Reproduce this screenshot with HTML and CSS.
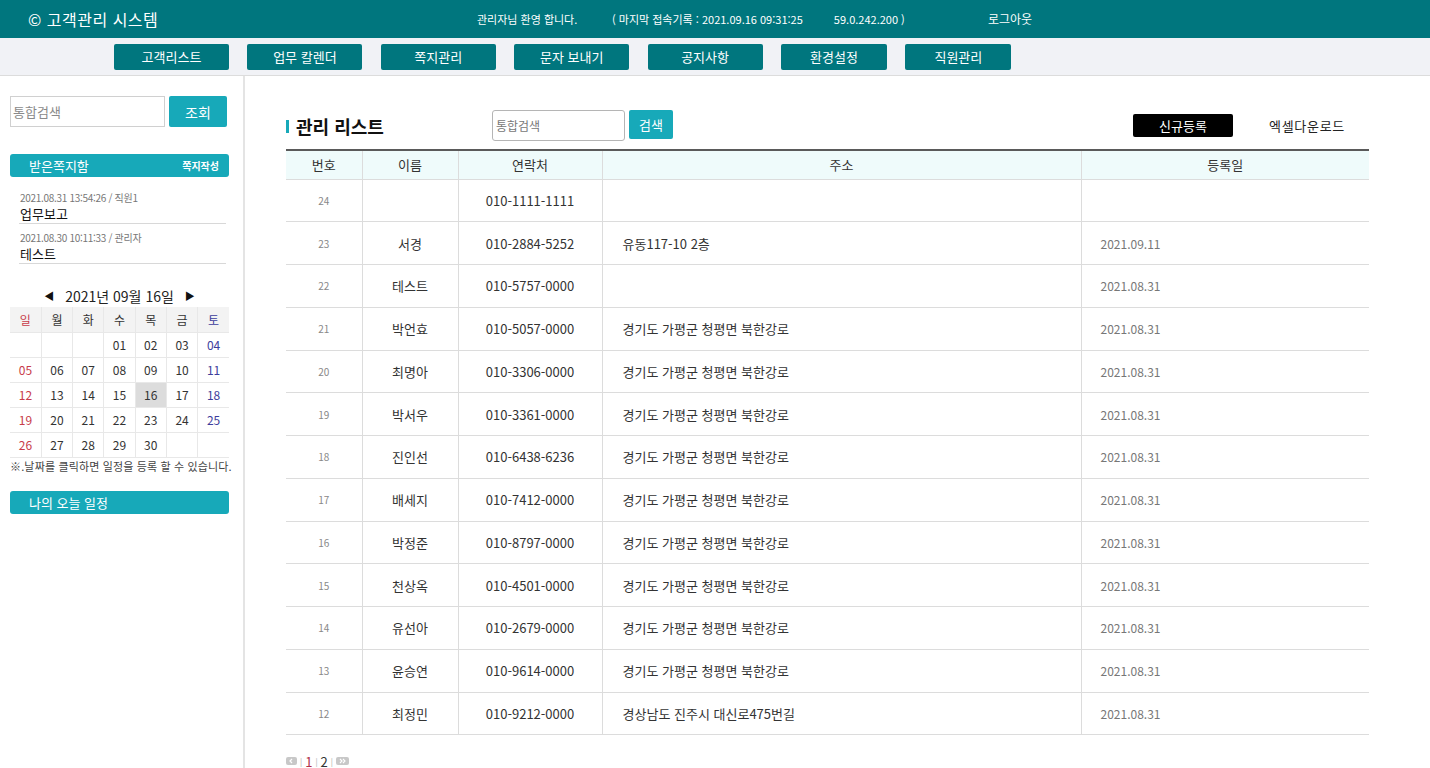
FILE: index.html
```html
<!DOCTYPE html>
<html lang="ko">
<head>
<meta charset="utf-8">
<title>고객관리 시스템</title>
<link rel="stylesheet" href="styles.css">
</head>
<body>
<header class="top">
  <div class="brand">© 고객관리 시스템</div>
  <div class="welcome">관리자님 환영 합니다.</div>
  <div class="last">( 마지막 접속기록 : 2021.09.16 09:31:25 <span class="ip">59.0.242.200 )</span></div>
  <div class="logout">로그아웃</div>
</header>
<nav class="gnb">
  <a class="nav-btn">고객리스트</a>
  <a class="nav-btn">업무 칼렌더</a>
  <a class="nav-btn">쪽지관리</a>
  <a class="nav-btn">문자 보내기</a>
  <a class="nav-btn">공지사항</a>
  <a class="nav-btn narrow">환경설정</a>
  <a class="nav-btn narrow">직원관리</a>
</nav>
<div class="wrap">
  <aside class="side">
    <div class="side-search">
      <div class="side-input">통합검색</div>
      <button class="side-btn">조회</button>
    </div>
    <div class="side-bar msg-bar"><span>받은쪽지함</span><span class="write">쪽지작성</span></div>
    <ul class="msgs">
      <li><div class="meta">2021.08.31 13:54:26 / 직원1</div><div class="subj">업무보고</div></li>
      <li><div class="meta">2021.08.30 10:11:33 / 관리자</div><div class="subj">테스트</div></li>
    </ul>
    <div class="cal-title"><span class="arr">◀</span><span>2021년 09월 16일</span><span class="arr">▶</span></div>
    <table class="cal">
      <tr class="cal-head"><th class="sun">일</th><th>월</th><th>화</th><th>수</th><th>목</th><th>금</th><th class="sat">토</th></tr>
      <tr><td></td><td></td><td></td><td>01</td><td>02</td><td>03</td><td class="sat">04</td></tr>
      <tr><td class="sun">05</td><td>06</td><td>07</td><td>08</td><td>09</td><td>10</td><td class="sat">11</td></tr>
      <tr><td class="sun">12</td><td>13</td><td>14</td><td>15</td><td class="today">16</td><td>17</td><td class="sat">18</td></tr>
      <tr><td class="sun">19</td><td>20</td><td>21</td><td>22</td><td>23</td><td>24</td><td class="sat">25</td></tr>
      <tr><td class="sun">26</td><td>27</td><td>28</td><td>29</td><td>30</td><td></td><td></td></tr>
    </table>
    <p class="cal-note">※.날짜를 클릭하면 일정을 등록 할 수 있습니다.</p>
    <div class="side-bar today-bar"><span>나의 오늘 일정</span></div>
  </aside>
  <main class="main">
    <div class="list-top">
      <h2 class="list-title">관리 리스트</h2>
      <div class="list-search">
        <div class="list-input">통합검색</div>
        <button class="list-btn">검색</button>
      </div>
      <div class="list-actions">
        <button class="new-btn">신규등록</button>
        <span class="excel">엑셀다운로드</span>
      </div>
    </div>
    <table class="grid">
      <colgroup><col class="c1"><col class="c2"><col class="c3"><col class="c4"><col class="c5"></colgroup>
      <thead><tr><th>번호</th><th>이름</th><th>연락처</th><th>주소</th><th>등록일</th></tr></thead>
      <tbody>
        <tr><td class="no">24</td><td class="nm"></td><td class="ph">010-1111-1111</td><td class="ad"></td><td class="dt"></td></tr>
        <tr><td class="no">23</td><td class="nm">서경</td><td class="ph">010-2884-5252</td><td class="ad">유동117-10 2층</td><td class="dt">2021.09.11</td></tr>
        <tr><td class="no">22</td><td class="nm">테스트</td><td class="ph">010-5757-0000</td><td class="ad"></td><td class="dt">2021.08.31</td></tr>
        <tr><td class="no">21</td><td class="nm">박언효</td><td class="ph">010-5057-0000</td><td class="ad">경기도 가평군 청평면 북한강로</td><td class="dt">2021.08.31</td></tr>
        <tr><td class="no">20</td><td class="nm">최명아</td><td class="ph">010-3306-0000</td><td class="ad">경기도 가평군 청평면 북한강로</td><td class="dt">2021.08.31</td></tr>
        <tr><td class="no">19</td><td class="nm">박서우</td><td class="ph">010-3361-0000</td><td class="ad">경기도 가평군 청평면 북한강로</td><td class="dt">2021.08.31</td></tr>
        <tr><td class="no">18</td><td class="nm">진인선</td><td class="ph">010-6438-6236</td><td class="ad">경기도 가평군 청평면 북한강로</td><td class="dt">2021.08.31</td></tr>
        <tr><td class="no">17</td><td class="nm">배세지</td><td class="ph">010-7412-0000</td><td class="ad">경기도 가평군 청평면 북한강로</td><td class="dt">2021.08.31</td></tr>
        <tr><td class="no">16</td><td class="nm">박정준</td><td class="ph">010-8797-0000</td><td class="ad">경기도 가평군 청평면 북한강로</td><td class="dt">2021.08.31</td></tr>
        <tr><td class="no">15</td><td class="nm">천상옥</td><td class="ph">010-4501-0000</td><td class="ad">경기도 가평군 청평면 북한강로</td><td class="dt">2021.08.31</td></tr>
        <tr><td class="no">14</td><td class="nm">유선아</td><td class="ph">010-2679-0000</td><td class="ad">경기도 가평군 청평면 북한강로</td><td class="dt">2021.08.31</td></tr>
        <tr><td class="no">13</td><td class="nm">윤승연</td><td class="ph">010-9614-0000</td><td class="ad">경기도 가평군 청평면 북한강로</td><td class="dt">2021.08.31</td></tr>
        <tr><td class="no">12</td><td class="nm">최정민</td><td class="ph">010-9212-0000</td><td class="ad">경상남도 진주시 대신로475번길</td><td class="dt">2021.08.31</td></tr>
      </tbody>
    </table>
    <div class="paging">
      <span class="pg-icon"><svg width="11" height="8" viewBox="0 0 11 8"><path d="M6 2 L4 4 L6 6" fill="none" stroke="#fff" stroke-width="1.2"/></svg></span>
      <span class="sep">|</span><span class="cur">1</span><span class="sep">|</span><span class="pg">2</span><span class="sep">|</span>
      <span class="pg-icon wide"><svg width="13" height="8" viewBox="0 0 13 8"><path d="M4 2 L6 4 L4 6 M7 2 L9 4 L7 6" fill="none" stroke="#fff" stroke-width="1.1"/></svg></span>
    </div>
  </main>
</div>
</body>
</html>
```
FILE: styles.css
```css
* { box-sizing: border-box; }
html, body { margin: 0; padding: 0; }
body {
  font-family: "Noto Sans CJK KR", "Noto Sans", sans-serif;
  color: #333;
  background: #fff;
  width: 1430px;
  overflow: hidden;
}
ul { list-style: none; margin: 0; padding: 0; }
p, h2 { margin: 0; }
button { font-family: inherit; border: 0; cursor: pointer; padding: 0; }

/* header */
.top {
  height: 38px;
  background: #00767e;
  color: #fff;
  display: flex;
  align-items: center;
  font-size: 11px;
  line-height: 16px;
}
.brand { font-size: 16px; padding-left: 28px; width: 477px; letter-spacing: 0.5px; }
.welcome { width: 135px; }
.last { width: 376px; }
.last .ip { margin-left: 28px; }
.logout { font-size: 12px; }

/* nav */
.gnb {
  height: 38px;
  background: #f1f2f6;
  border-bottom: 1px solid #dcdcdc;
  display: flex;
  align-items: flex-start;
  padding: 6px 0 0 114px;
  gap: 18.4px;
}
.nav-btn {
  width: 115px;
  height: 26px;
  background: #00767e;
  color: #fff;
  font-size: 13px;
  line-height: 26px;
  text-align: center;
  border-radius: 2px;
}
.nav-btn.narrow { width: 106px; }

/* layout */
.wrap { display: flex; min-height: 692px; }
.side {
  width: 245px;
  flex: 0 0 245px;
  border-right: 2px solid #e4e4e4;
  padding: 20px 14px 0 10px;
}

.side-search { display: flex; gap: 4px; }
.side-input {
  width: 155px;
  height: 31px;
  border: 1px solid #d0d0d0;
  font-size: 13px;
  color: #8a8a8a;
  line-height: 29px;
  padding-left: 2px;
}
.side-btn {
  width: 58px;
  height: 31px;
  background: #17a9b9;
  color: #fff;
  font-size: 14px;
  border-radius: 2px;
}

.side-bar {
  width: 219px;
  height: 23px;
  background: #17a9b9;
  color: #fff;
  border-radius: 3px;
  font-size: 13px;
  line-height: 23px;
  padding: 0 10px 0 19px;
  display: flex;
  justify-content: space-between;
}
.msg-bar { margin-top: 27px; }
.msg-bar .write { font-size: 10px; font-weight: bold; }

.msgs { padding: 14px 3px 0 9px; }
.msgs li { border-bottom: 1px solid #d8d8d8; padding: 0 0 2px 1px; height: 40px; }
.msgs li:first-child { height: 33px; }
.msgs li + li { padding-top: 7px; }
.meta { font-size: 10px; color: #777; line-height: 14px; letter-spacing: -0.3px; }
.subj { font-size: 13px; color: #111; line-height: 17px; }

.cal-title {
  margin-top: 22px;
  height: 20px;
  font-size: 14px;
  line-height: 20px;
  color: #222;
  display: flex;
  justify-content: center;
  gap: 11px;
  width: 219px;
}
.cal-title .arr { font-size: 10px; color: #111; }
.cal {
  width: 219px;
  margin-top: 1px;
  border-collapse: collapse;
  table-layout: fixed;
  font-size: 12px;
}
.cal th, .cal td {
  height: 25px;
  text-align: center;
  border: 1px solid #e8e8e8;
  font-weight: normal;
  color: #333;
  padding: 0;
}
.cal tr:first-child th { border-top: 0; }
.cal th:first-child, .cal td:first-child { border-left: 0; }
.cal th:last-child, .cal td:last-child { border-right: 0; }
.cal-head th { background: #f3f3f3; }
.cal .sun { color: #c83c4a; }
.cal .sat { color: #3d3d9c; }
.cal .today { background: #dcdcdc; }
.cal-note {
  font-size: 11px;
  color: #444;
  line-height: 14px;
  margin-top: 1px;
  letter-spacing: 0.15px;
  white-space: nowrap;
}
.today-bar { margin-top: 18px; }

/* main */
.main { flex: 1; padding: 34px 61px 0 41px; }
.list-top { display: flex; align-items: center; height: 31px; }
.list-title {
  width: 206px;
  font-size: 18px;
  font-weight: bold;
  color: #111;
  line-height: 24px;
  padding-left: 10px;
  position: relative;
}
.list-title::before {
  content: "";
  position: absolute;
  left: 0;
  top: 6px;
  width: 3px;
  height: 13px;
  background: #17a9b9;
}
.list-search { display: flex; gap: 4px; align-items: flex-start; }
.list-input {
  width: 133px;
  height: 31px;
  border: 1px solid #b5b5b5;
  border-radius: 3px;
  font-size: 12px;
  color: #777;
  line-height: 29px;
  padding-left: 3px;
}
.list-btn {
  width: 44px;
  height: 29px;
  background: #17a9b9;
  color: #fff;
  font-size: 13px;
  border-radius: 2px;
}
.list-actions { margin-left: auto; display: flex; align-items: center; padding-right: 24px; }
.new-btn {
  width: 100px;
  height: 23px;
  background: #000;
  color: #fff;
  font-size: 13px;
  border-radius: 2px;
}
.excel { margin-left: 36px; font-size: 13px; color: #222; letter-spacing: 0.7px; }

.grid {
  width: 1083px;
  margin-top: 8px;
  border-collapse: collapse;
  table-layout: fixed;
  border-top: 2px solid #5a5a5a;
}
.grid .c1 { width: 76px; }
.grid .c2 { width: 96px; }
.grid .c3 { width: 144px; }
.grid .c4 { width: 479px; }
.grid .c5 { width: 288px; }
.grid th {
  height: 29px;
  background: #effbfb;
  font-weight: normal;
  font-size: 13px;
  color: #333;
  border: 1px solid #dcdcdc;
  border-top: 0;
  padding: 0;
}
.grid td {
  height: 42.75px;
  border: 1px solid #dcdcdc;
  padding: 0;
  font-size: 13px;
  color: #333;
}
.grid th:first-child, .grid td:first-child { border-left: 0; }
.grid th:last-child, .grid td:last-child { border-right: 0; }
.grid td.no { text-align: center; font-size: 10px; color: #888; }
.grid td.nm, .grid td.ph { text-align: center; }
.grid td.ad { padding-left: 20px; }
.grid td.dt { padding-left: 19px; font-size: 12px; color: #777; }

.paging {
  margin-top: 18px;
  display: flex;
  align-items: center;
  font-size: 13px;
  color: #333;
  height: 16px;
}
.pg-icon {
  width: 11px;
  height: 8px;
  background: #c8c8c8;
  border-radius: 2px;
  display: inline-flex;
}
.pg-icon.wide { width: 13px; }
.sep { font-size: 8px; color: #aaa; margin: 0 3px; }
.cur { color: #b0304a; }
.pg { color: #333; }
```
